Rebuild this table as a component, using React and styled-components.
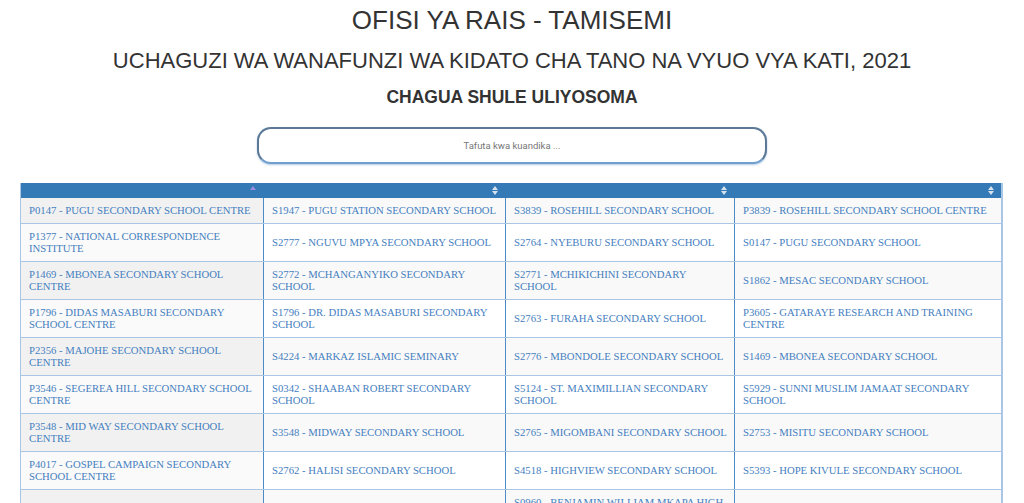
import React from "react";
import styled, { createGlobalStyle } from "styled-components";

const Global = createGlobalStyle`
  html, body { margin: 0; padding: 0; background: #fff; }
  body { font-family: "Liberation Sans", Arial, sans-serif; color: #333; }
`;

const Page = styled.div`
  display: flex;
  flex-direction: column;
  align-items: center;
  padding-top: 5px;
`;

const Title = styled.h1`
  margin: 0;
  font-size: 26px;
  font-weight: 400;
  line-height: 30px;
  color: #333;
`;

const Subtitle = styled.h2`
  margin: 13px 0 0;
  font-size: 22px;
  font-weight: 400;
  line-height: 26px;
  color: #333;
`;

const Prompt = styled.h3`
  margin: 13px 0 0;
  font-size: 17.5px;
  font-weight: 700;
  line-height: 20px;
  color: #333;
`;

const Search = styled.input`
  margin-top: 20px;
  width: 510px;
  height: 37px;
  box-sizing: border-box;
  border-radius: 14px;
  border: 2px solid #5b7897;
  border-bottom-color: #6f9fcf;
  box-shadow: 0 1px 2px rgba(102, 150, 200, 0.5);
  text-align: center;
  font-family: Roboto, "Open Sans", sans-serif;
  font-size: 9.5px;
  color: #555;
  outline: none;
  &::placeholder { color: #777; }
`;

const TableWrap = styled.div`
  align-self: stretch;
  padding: 19px 23px 0 20px;
`;

const Table = styled.table`
  width: 981px;
  border-collapse: collapse;
  table-layout: fixed;
  border-left: 1px solid #a9c6e5;
  border-right: 2px solid #a9c6e5;
`;

const HeadCell = styled.th`
  position: relative;
  height: 15px;
  padding: 0;
  background: #337ab7;
  border-right: 1px solid #337ab7;
`;

const SortIcon = styled.span`
  position: absolute;
  right: 7px;
  top: 3px;
  display: flex;
  flex-direction: column;
  gap: 1px;
`;

const Tri = styled.span`
  width: 0;
  height: 0;
  border-left: 3px solid transparent;
  border-right: 3px solid transparent;
  ${(p) =>
    p.$up
      ? `border-bottom: 4px solid ${p.$color};`
      : `border-top: 4px solid ${p.$color};`}
`;

const Cell = styled.td`
  padding: 6px 4px 6px 8px;
  font-family: "Liberation Serif", "Times New Roman", serif;
  font-size: 10.7px;
  line-height: 12.5px;
  color: #4580bf;
  vertical-align: middle;
  border-bottom: 1px solid #a9c6e5;
  border-right: 1px solid #4d8ac8;
  background: ${(p) =>
    p.$sorted ? (p.$odd ? "#f1f1f1" : "#fafafa") : p.$odd ? "#f9f9f9" : "#fff"};
`;

const rows = [
  ["P0147 - PUGU SECONDARY SCHOOL CENTRE", "S1947 - PUGU STATION SECONDARY SCHOOL", "S3839 - ROSEHILL SECONDARY SCHOOL", "P3839 - ROSEHILL SECONDARY SCHOOL CENTRE"],
  ["P1377 - NATIONAL CORRESPONDENCE INSTITUTE", "S2777 - NGUVU MPYA SECONDARY SCHOOL", "S2764 - NYEBURU SECONDARY SCHOOL", "S0147 - PUGU SECONDARY SCHOOL"],
  ["P1469 - MBONEA SECONDARY SCHOOL CENTRE", "S2772 - MCHANGANYIKO SECONDARY SCHOOL", "S2771 - MCHIKICHINI SECONDARY SCHOOL", "S1862 - MESAC SECONDARY SCHOOL"],
  ["P1796 - DIDAS MASABURI SECONDARY SCHOOL CENTRE", "S1796 - DR. DIDAS MASABURI SECONDARY SCHOOL", "S2763 - FURAHA SECONDARY SCHOOL", "P3605 - GATARAYE RESEARCH AND TRAINING CENTRE"],
  ["P2356 - MAJOHE SECONDARY SCHOOL CENTRE", "S4224 - MARKAZ ISLAMIC SEMINARY", "S2776 - MBONDOLE SECONDARY SCHOOL", "S1469 - MBONEA SECONDARY SCHOOL"],
  ["P3546 - SEGEREA HILL SECONDARY SCHOOL CENTRE", "S0342 - SHAABAN ROBERT SECONDARY SCHOOL", "S5124 - ST. MAXIMILLIAN SECONDARY SCHOOL", "S5929 - SUNNI MUSLIM JAMAAT SECONDARY SCHOOL"],
  ["P3548 - MID WAY SECONDARY SCHOOL CENTRE", "S3548 - MIDWAY SECONDARY SCHOOL", "S2765 - MIGOMBANI SECONDARY SCHOOL", "S2753 - MISITU SECONDARY SCHOOL"],
  ["P4017 - GOSPEL CAMPAIGN SECONDARY SCHOOL CENTRE", "S2762 - HALISI SECONDARY SCHOOL", "S4518 - HIGHVIEW SECONDARY SCHOOL", "S5393 - HOPE KIVULE SECONDARY SCHOOL"],
  ["", "P0101 - AZANIA SECONDARY SCHOOL", "S0960 - BENJAMIN WILLIAM MKAPA HIGH SCHOOL", ""],
];

const widths = [243, 242, 229, 267];

export default function App() {
  return (
    <>
      <Global />
      <Page>
        <Title>OFISI YA RAIS - TAMISEMI</Title>
        <Subtitle>UCHAGUZI WA WANAFUNZI WA KIDATO CHA TANO NA VYUO VYA KATI, 2021</Subtitle>
        <Prompt>CHAGUA SHULE ULIYOSOMA</Prompt>
        <Search placeholder="Tafuta kwa kuandika ..." />
        <TableWrap>
          <Table>
            <colgroup>
              {widths.map((w, i) => (
                <col key={i} style={{ width: w }} />
              ))}
            </colgroup>
            <thead>
              <tr>
                {widths.map((_, i) => (
                  <HeadCell key={i}>
                    <SortIcon>
                      {i === 0 ? (
                        <Tri $up $color="#9b8fe0" />
                      ) : (
                        <>
                          <Tri $up $color="#d6e2ee" />
                          <Tri $color="#d6e2ee" />
                        </>
                      )}
                    </SortIcon>
                  </HeadCell>
                ))}
              </tr>
            </thead>
            <tbody>
              {rows.map((r, ri) => (
                <tr key={ri}>
                  {r.map((c, ci) => (
                    <Cell key={ci} $odd={ri % 2 === 0} $sorted={ci === 0}>
                      {c}
                    </Cell>
                  ))}
                </tr>
              ))}
            </tbody>
          </Table>
        </TableWrap>
      </Page>
    </>
  );
}
